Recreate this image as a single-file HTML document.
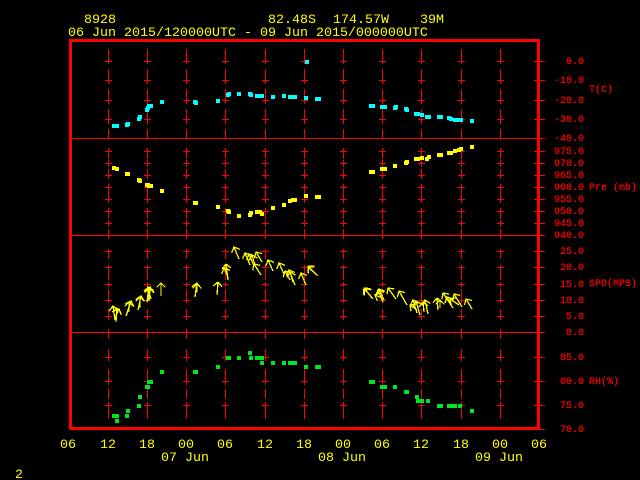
<!DOCTYPE html>
<html>
<head>
<meta charset="utf-8">
<style>
html,body{margin:0;padding:0;background:#000;width:640px;height:480px;overflow:hidden}
svg{display:block}
.y{fill:#ffff00;font:13.33px "Liberation Mono",monospace}
.r{fill:#ff0000;stroke:#ff0000;stroke-width:.2;font:10px "Liberation Mono",monospace}
.e{text-anchor:end}
.a line{stroke:#ffff00;stroke-width:1.3;marker-end:url(#h)}
</style>
</head>
<body>
<svg xmlns="http://www.w3.org/2000/svg" width="640" height="480" viewBox="0 0 640 480" shape-rendering="crispEdges">
<defs>
<marker id="h" markerUnits="userSpaceOnUse" markerWidth="14" markerHeight="14" refX="7" refY="7" orient="auto">
<path d="M2.5 2.5L7 7L2.5 11.5" fill="none" stroke="#ffff00" stroke-width="1.3"/>
</marker>
<path id="c" fill="#ff0000" d="M0 49h1v15h-1zM0 69h1v15h-1zM0 89h1v15h-1zM0 109h1v15h-1zM0 129h1v9h-1zM0 148h1v11h-1zM0 160h1v7h-1zM0 169h1v10h-1zM0 184h1v19h-1zM0 208h1v11h-1zM0 220h1v7h-1zM0 229h1v10h-1zM0 249h1v10h-1zM0 265h1v15h-1zM0 282h1v5h-1zM0 289h1v14h-1zM0 309h1v11h-1zM0 329h1v10h-1zM0 349h1v12h-1zM0 369h1v16h-1zM0 389h1v10h-1zM0 402h1v17h-1zM-3 61h7v1h-7zM-3 80h7v1h-7zM-3 100h7v1h-7zM-3 119h7v1h-7zM-3 151h7v1h-7zM-3 163h7v1h-7zM-3 175h7v1h-7zM-3 187h7v1h-7zM-3 199h7v1h-7zM-3 211h7v1h-7zM-3 223h7v1h-7zM-3 251h7v1h-7zM-3 267h7v1h-7zM-3 284h7v1h-7zM-3 300h7v1h-7zM-3 316h7v1h-7zM-3 357h7v1h-7zM-3 381h7v1h-7zM-3 405h7v1h-7z"/>
</defs>
<rect width="640" height="480" fill="#000"/>
<use href="#c" x="108"/><use href="#c" x="147"/><use href="#c" x="186"/><use href="#c" x="225"/><use href="#c" x="265"/><use href="#c" x="304"/><use href="#c" x="343"/><use href="#c" x="382"/><use href="#c" x="421"/><use href="#c" x="461"/><use href="#c" x="500"/>
<path fill="#ff0000" d="M72 138h473v1h-473zM72 235h473v1h-473zM72 332h473v1h-473zM534 61h11v1h-11zM534 80h11v1h-11zM534 100h11v1h-11zM534 119h11v1h-11zM534 151h11v1h-11zM534 163h11v1h-11zM534 175h11v1h-11zM534 187h11v1h-11zM534 199h11v1h-11zM534 211h11v1h-11zM534 223h11v1h-11zM534 251h11v1h-11zM534 267h11v1h-11zM534 284h11v1h-11zM534 300h11v1h-11zM534 316h11v1h-11zM534 357h11v1h-11zM534 381h11v1h-11zM534 405h11v1h-11zM534 429h11v1h-11zM69 39h471v3h-471zM69 427h471v3h-471zM69 39h3v391h-3zM537 39h3v391h-3z"/>

<path fill="#00ffff" d="M112 124h4v4h-4zM115 124h4v4h-4zM125 123h4v4h-4zM126 122h4v4h-4zM137 117h4v4h-4zM138 115h4v4h-4zM145 108h4v4h-4zM146 106h4v4h-4zM147 104h4v4h-4zM149 104h4v4h-4zM160 100h4v4h-4zM193 100h4v4h-4zM194 101h4v4h-4zM216 99h4v4h-4zM226 93h4v4h-4zM227 92h4v4h-4zM237 92h4v4h-4zM248 92h4v4h-4zM249 93h4v4h-4zM255 94h4v4h-4zM258 94h4v4h-4zM260 94h4v4h-4zM271 95h4v4h-4zM282 94h4v4h-4zM288 95h4v4h-4zM291 95h4v4h-4zM293 95h4v4h-4zM304 96h4v4h-4zM305 60h4v4h-4zM315 97h4v4h-4zM317 97h4v4h-4zM369 104h4v4h-4zM371 104h4v4h-4zM380 105h4v4h-4zM383 105h4v4h-4zM393 106h4v4h-4zM394 105h4v4h-4zM404 107h4v4h-4zM405 108h4v4h-4zM414 112h4v4h-4zM416 112h4v4h-4zM420 113h4v4h-4zM425 115h4v4h-4zM427 115h4v4h-4zM437 115h4v4h-4zM439 115h4v4h-4zM447 116h4v4h-4zM449 117h4v4h-4zM453 118h4v4h-4zM457 118h4v4h-4zM459 118h4v4h-4zM470 119h4v4h-4z"/>

<path fill="#ffff00" d="M112 166h4v4h-4zM115 167h4v4h-4zM125 172h4v4h-4zM126 172h4v4h-4zM137 178h4v4h-4zM138 179h4v4h-4zM145 183h4v4h-4zM146 183h4v4h-4zM147 184h4v4h-4zM149 184h4v4h-4zM160 189h4v4h-4zM193 201h4v4h-4zM194 201h4v4h-4zM216 205h4v4h-4zM226 209h4v4h-4zM227 210h4v4h-4zM237 214h4v4h-4zM248 213h4v4h-4zM249 211h4v4h-4zM255 210h4v4h-4zM258 210h4v4h-4zM260 212h4v4h-4zM271 206h4v4h-4zM282 203h4v4h-4zM288 199h4v4h-4zM291 198h4v4h-4zM293 198h4v4h-4zM304 194h4v4h-4zM315 195h4v4h-4zM317 195h4v4h-4zM369 170h4v4h-4zM371 170h4v4h-4zM380 167h4v4h-4zM383 167h4v4h-4zM393 164h4v4h-4zM404 161h4v4h-4zM405 160h4v4h-4zM414 157h4v4h-4zM416 157h4v4h-4zM420 156h4v4h-4zM425 157h4v4h-4zM427 155h4v4h-4zM437 153h4v4h-4zM439 153h4v4h-4zM447 151h4v4h-4zM449 151h4v4h-4zM453 149h4v4h-4zM457 148h4v4h-4zM459 147h4v4h-4zM470 145h4v4h-4z"/>

<g class="a">
<line x1="115" y1="320" x2="113" y2="306"/>
<line x1="116" y1="322" x2="117" y2="308"/>
<line x1="115" y1="318" x2="119" y2="309"/>
<line x1="126" y1="316" x2="131" y2="301"/>
<line x1="129" y1="312" x2="129" y2="302"/>
<line x1="138" y1="310" x2="141" y2="296"/>
<line x1="140" y1="308" x2="140" y2="297"/>
<line x1="147" y1="302" x2="149" y2="287"/>
<line x1="148" y1="300" x2="150" y2="287"/>
<line x1="149" y1="301" x2="150" y2="288"/>
<line x1="151" y1="299" x2="148" y2="287"/>
<line x1="161" y1="296" x2="161" y2="283"/>
<line x1="195" y1="297" x2="197" y2="283"/>
<line x1="197" y1="292" x2="197" y2="284"/>
<line x1="217" y1="295" x2="218" y2="282"/>
<line x1="228" y1="280" x2="226" y2="264"/>
<line x1="228" y1="277" x2="224" y2="268"/>
<line x1="239" y1="259" x2="234" y2="247"/>
<line x1="250" y1="265" x2="245" y2="253"/>
<line x1="254" y1="266" x2="249" y2="254"/>
<line x1="262" y1="262" x2="256" y2="252"/>
<line x1="255" y1="265" x2="252" y2="255"/>
<line x1="261" y1="275" x2="254" y2="264"/>
<line x1="273" y1="271" x2="268" y2="260"/>
<line x1="284" y1="274" x2="279" y2="263"/>
<line x1="290" y1="280" x2="285" y2="271"/>
<line x1="295" y1="285" x2="289" y2="270"/>
<line x1="293" y1="282" x2="290" y2="272"/>
<line x1="306" y1="285" x2="301" y2="273"/>
<line x1="318" y1="276" x2="308" y2="266"/>
<line x1="317" y1="275" x2="308" y2="267"/>
<line x1="373" y1="299" x2="364" y2="288"/>
<line x1="372" y1="298" x2="365" y2="289"/>
<line x1="384" y1="300" x2="379" y2="289"/>
<line x1="383" y1="302" x2="378" y2="290"/>
<line x1="382" y1="298" x2="375" y2="295"/>
<line x1="396" y1="299" x2="388" y2="288"/>
<line x1="407" y1="305" x2="399" y2="291"/>
<line x1="417" y1="313" x2="413" y2="300"/>
<line x1="420" y1="315" x2="416" y2="301"/>
<line x1="417" y1="310" x2="410" y2="305"/>
<line x1="428" y1="314" x2="425" y2="300"/>
<line x1="424" y1="312" x2="423" y2="302"/>
<line x1="438" y1="310" x2="437" y2="298"/>
<line x1="440" y1="308" x2="440" y2="300"/>
<line x1="453" y1="308" x2="443" y2="293"/>
<line x1="451" y1="305" x2="447" y2="297"/>
<line x1="462" y1="307" x2="454" y2="294"/>
<line x1="459" y1="305" x2="450" y2="299"/>
<line x1="472" y1="309" x2="466" y2="299"/>
</g>

<path fill="#00e61e" d="M112 414h4v4h-4zM115 414h4v4h-4zM115 419h4v4h-4zM125 414h4v4h-4zM126 409h4v4h-4zM137 404h4v4h-4zM138 395h4v4h-4zM145 385h4v4h-4zM146 385h4v4h-4zM147 380h4v4h-4zM149 380h4v4h-4zM160 370h4v4h-4zM193 370h4v4h-4zM194 370h4v4h-4zM216 365h4v4h-4zM226 356h4v4h-4zM227 356h4v4h-4zM237 356h4v4h-4zM248 351h4v4h-4zM249 356h4v4h-4zM255 356h4v4h-4zM258 356h4v4h-4zM260 356h4v4h-4zM260 361h4v4h-4zM271 361h4v4h-4zM282 361h4v4h-4zM288 361h4v4h-4zM291 361h4v4h-4zM293 361h4v4h-4zM304 365h4v4h-4zM315 365h4v4h-4zM317 365h4v4h-4zM369 380h4v4h-4zM371 380h4v4h-4zM380 385h4v4h-4zM383 385h4v4h-4zM393 385h4v4h-4zM404 390h4v4h-4zM405 390h4v4h-4zM415 395h4v4h-4zM416 399h4v4h-4zM418 399h4v4h-4zM420 399h4v4h-4zM426 399h4v4h-4zM437 404h4v4h-4zM439 404h4v4h-4zM447 404h4v4h-4zM449 404h4v4h-4zM453 404h4v4h-4zM458 404h4v4h-4zM470 409h4v4h-4z"/>

<text class="y" x="84" y="23">8928</text>
<text class="y" x="268" y="23">82.48S</text>
<text class="y" x="333" y="23">174.57W</text>
<text class="y" x="420" y="23">39M</text>
<text class="y" x="68" y="36">06 Jun 2015/120000UTC - 09 Jun 2015/000000UTC</text>

<text class="r e" x="584" y="64">0.0</text>
<text class="r e" x="584" y="83">-10.0</text>
<text class="r e" x="584" y="103">-20.0</text>
<text class="r e" x="584" y="122">-30.0</text>
<text class="r e" x="584" y="141">-40.0</text>
<text class="r e" x="584" y="154">975.0</text>
<text class="r e" x="584" y="166">970.0</text>
<text class="r e" x="584" y="178">965.0</text>
<text class="r e" x="584" y="190">960.0</text>
<text class="r e" x="584" y="202">955.0</text>
<text class="r e" x="584" y="214">950.0</text>
<text class="r e" x="584" y="226">945.0</text>
<text class="r e" x="584" y="238">940.0</text>
<text class="r e" x="584" y="254">25.0</text>
<text class="r e" x="584" y="270">20.0</text>
<text class="r e" x="584" y="287">15.0</text>
<text class="r e" x="584" y="303">10.0</text>
<text class="r e" x="584" y="319">5.0</text>
<text class="r e" x="584" y="335">0.0</text>
<text class="r e" x="584" y="360">85.0</text>
<text class="r e" x="584" y="384">80.0</text>
<text class="r e" x="584" y="408">75.0</text>
<text class="r e" x="584" y="432">70.0</text>
<text class="r" x="589" y="92">T(C)</text>
<text class="r" x="589" y="190">Pre (mb)</text>
<text class="r" x="589" y="286">SPD(MPS)</text>
<text class="r" x="589" y="384">RH(%)</text>

<text class="y" x="60" y="448">06</text>
<text class="y" x="100" y="448">12</text>
<text class="y" x="139" y="448">18</text>
<text class="y" x="178" y="448">00</text>
<text class="y" x="217" y="448">06</text>
<text class="y" x="257" y="448">12</text>
<text class="y" x="296" y="448">18</text>
<text class="y" x="335" y="448">00</text>
<text class="y" x="374" y="448">06</text>
<text class="y" x="413" y="448">12</text>
<text class="y" x="453" y="448">18</text>
<text class="y" x="492" y="448">00</text>
<text class="y" x="531" y="448">06</text>
<text class="y" x="161" y="461">07 Jun</text>
<text class="y" x="318" y="461">08 Jun</text>
<text class="y" x="475" y="461">09 Jun</text>
<text class="y" x="15" y="478">2</text>
</svg>
</body>
</html>
